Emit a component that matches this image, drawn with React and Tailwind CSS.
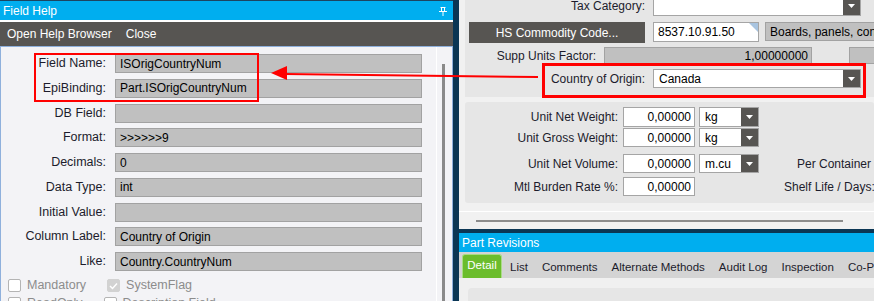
import React from "react";

function DropArrow() {
  return (
    <div className="w-[17px] shrink-0 self-stretch bg-[#575552] flex items-center justify-center">
      <svg width="7" height="4" viewBox="0 0 7 4">
        <polygon points="0,0 7,0 3.5,4" fill="#ffffff" />
      </svg>
    </div>
  );
}

function Select({ value, className }) {
  return (
    <div className={`flex shrink-0 bg-white border border-[#a5a5a5] ${className}`}>
      <span className="flex-1 pl-[5px] flex items-center text-[12px] text-black">{value}</span>
      <DropArrow />
    </div>
  );
}

function NumBox({ value }) {
  return (
    <div className="ml-[5px] w-[72px] h-full shrink-0 bg-white border border-[#a5a5a5] flex items-center justify-end pr-[3px] text-[12px] text-black">
      {value}
    </div>
  );
}

function HelpRow({ label, value }) {
  return (
    <div className="flex items-center h-[19px] shrink-0">
      <div className="w-[105px] shrink-0 text-right text-[12.5px] text-[#1c1c2c]">{label}</div>
      <div className="ml-[9px] w-[307px] shrink-0 h-full bg-[#c0c0c0] border border-[#a2a2a2] flex items-center pl-[4px] text-[12px] text-black">
        {value}
      </div>
    </div>
  );
}

function Check({ label, checked }) {
  return (
    <div className="flex items-center gap-[6px] shrink-0 h-[15px]">
      <div
        className={`w-[13px] h-[13px] rounded-[2px] border flex items-center justify-center ${
          checked ? "bg-[#d2d2d2] border-[#d2d2d2]" : "bg-white border-[#b4b4b4]"
        }`}
      >
        {checked && (
          <svg width="9" height="8" viewBox="0 0 9 8">
            <path d="M1 4 L3.5 6.5 L8 1.5" stroke="#ffffff" strokeWidth="1.5" fill="none" />
          </svg>
        )}
      </div>
      <span className="text-[12.5px] leading-[15px] text-[#8c8c8c]">{label}</span>
    </div>
  );
}

function FieldHelp() {
  const rows = [
    ["Field Name:", "ISOrigCountryNum"],
    ["EpiBinding:", "Part.ISOrigCountryNum"],
    ["DB Field:", ""],
    ["Format:", ">>>>>>9"],
    ["Decimals:", "0"],
    ["Data Type:", "int"],
    ["Initial Value:", ""],
    ["Column Label:", "Country of Origin"],
    ["Like:", "Country.CountryNum"],
  ];
  return (
    <div className="w-[453px] h-full flex flex-col shrink-0">
      <div className="h-[1px] bg-[#1d4560]" />
      <div className="h-[19px] bg-[#00aeef] flex items-center justify-between pl-[3px] pr-[6px] text-white text-[12px]">
        <span>Field Help</span>
        <svg width="8" height="9" viewBox="0 0 8 9" className="mt-[1px]">
          <path d="M1.5 0.5 H6.5 M2.5 0.5 V4.5 M5.5 0.5 V4.5 M0 4.5 H8 M4 4.5 V9" stroke="#ffffff" strokeWidth="1" fill="none" />
        </svg>
      </div>
      <div className="h-[2px] bg-white" />
      <div className="h-[24px] bg-[#575552] flex items-center text-white text-[12px]">
        <span className="ml-[7px]">Open Help Browser</span>
        <span className="ml-[14px]">Close</span>
      </div>
      <div className="flex-1 min-h-0 flex bg-[#f3f3f6] border-l border-t border-r border-[#8fb0dc] overflow-hidden">
        <div className="flex-1 flex flex-col pt-[7px] whitespace-nowrap">
          <div className="flex flex-col gap-[5.75px] shrink-0">
            {rows.map(([l, v]) => (
              <HelpRow key={l} label={l} value={v} />
            ))}
          </div>
          <div className="flex gap-[21px] ml-[7px] mt-[7px] shrink-0">
            <Check label="Mandatory" />
            <Check label="SystemFlag" checked />
          </div>
          <div className="flex gap-[21px] ml-[7px] mt-[3px] shrink-0">
            <Check label="ReadOnly" />
            <Check label="Description Field" />
          </div>
        </div>
        <div className="w-[16px] shrink-0 border-l border-white flex flex-col">
          <div className="ml-[5px] mt-[17px] w-[3px] flex-1 bg-[#8a8a8a]" />
        </div>
      </div>
    </div>
  );
}

function PartPanel() {
  const tabs = ["List", "Comments", "Alternate Methods", "Audit Log", "Inspection", "Co-Parts"];
  return (
    <div className="flex-1 min-w-0 h-full flex flex-col bg-[#f1f1f1] overflow-hidden text-[#1c1c2c] whitespace-nowrap">
      <div className="ml-[6px] h-[97px] shrink-0 bg-[#e6e6e6] flex flex-col">
        <div className="flex items-center h-[20px] -mt-[4px]">
          <div className="w-[180px] shrink-0 text-right text-[12px]">Tax Category:</div>
          <Select value="" className="ml-[8px] w-[208px] h-full" />
        </div>
        <div className="flex items-start h-[22px] mt-[6px]">
          <div className="ml-[4px] w-[176px] shrink-0 h-[21px] bg-[#575552] text-white text-[12px] flex items-center justify-center">
            HS Commodity Code...
          </div>
          <div className="relative ml-[8px] w-[106px] shrink-0 h-[20px] bg-white border border-[#a5a5a5] flex items-center pl-[4px] text-[12px] text-black">
            8537.10.91.50
            <svg width="9" height="9" viewBox="0 0 9 9" className="absolute right-0 top-0">
              <polygon points="0,0 9,0 9,9" fill="#a8c4e0" />
            </svg>
          </div>
          <div className="ml-[6px] w-[140px] shrink-0 h-[19px] bg-[#c0c0c0] border border-[#a2a2a2] flex items-center pl-[4px] text-[12px] text-black">
            Boards, panels, consoles
          </div>
        </div>
        <div className="flex items-center h-[17px] mt-[3px]">
          <div className="w-[131px] shrink-0 text-right text-[12px]">Supp Units Factor:</div>
          <div className="ml-[8px] w-[208px] shrink-0 h-full bg-[#c0c0c0] border border-[#a2a2a2] flex items-center justify-end pr-[3px] text-[12px] text-black">
            1,00000000
          </div>
          <div className="ml-[37px] w-[60px] shrink-0 h-full bg-[#c0c0c0] border border-[#a2a2a2]" />
        </div>
        <div className="flex items-center h-[19px] mt-[5px]">
          <div className="w-[180px] shrink-0 text-right text-[12px]">Country of Origin:</div>
          <Select value="Canada" className="ml-[8px] w-[208px] h-full" />
        </div>
      </div>

      <div className="ml-[6px] mt-[5px] h-[101px] shrink-0 bg-[#e6e6e6] rounded-[3px] flex flex-col pt-[5px]">
        <div className="flex items-center h-[20px]">
          <div className="w-[153px] shrink-0 text-right text-[12px]">Unit Net Weight:</div>
          <NumBox value="0,00000" />
          <Select value="kg" className="ml-[4px] w-[60px] h-full" />
        </div>
        <div className="flex items-center h-[19px] mt-[1px]">
          <div className="w-[153px] shrink-0 text-right text-[12px]">Unit Gross Weight:</div>
          <NumBox value="0,00000" />
          <Select value="kg" className="ml-[4px] w-[60px] h-full" />
        </div>
        <div className="flex items-center h-[19px] mt-[7px]">
          <div className="w-[153px] shrink-0 text-right text-[12px]">Unit Net Volume:</div>
          <NumBox value="0,00000" />
          <Select value="m.cu" className="ml-[4px] w-[60px] h-full" />
          <span className="ml-[38px] shrink-0 text-[12px]">Per Container Qty:</span>
        </div>
        <div className="flex items-center h-[19px] mt-[4px]">
          <div className="w-[153px] shrink-0 text-right text-[12px]">Mtl Burden Rate %:</div>
          <NumBox value="0,00000" />
          <span className="ml-[89px] shrink-0 text-[12px]">Shelf Life / Days:</span>
        </div>
      </div>

      <div className="h-[26px] shrink-0 flex flex-col">
        <div className="h-[8px]" />
        <div className="h-[1px] bg-white" />
        <div className="ml-[17px] mt-[8px] w-[367px] h-[2px] bg-[#8c8c8c]" />
      </div>
      <div className="h-[4px] shrink-0 bg-[#0b3654]" />
      <div className="h-[19px] shrink-0 bg-[#00aeef] flex items-center pl-[3px] text-white text-[12px]">Part Revisions</div>
      <div className="h-[26px] shrink-0 bg-[#d4d4d4] flex items-end text-[11.5px]">
        <div className="ml-[3px] w-[40px] shrink-0 h-[24px] bg-[#6bbd2c] border border-b-0 border-[#a9dc86] rounded-t-[3px] text-white flex items-center justify-center pb-[2px]">
          Detail
        </div>
        <div className="flex items-center h-full gap-[14px] ml-[8px] pt-[5px]">
          {tabs.map((t) => (
            <span key={t} className="shrink-0">{t}</span>
          ))}
        </div>
      </div>
      <div className="flex-1 bg-[#f0f0f0] flex flex-col">
        <div className="ml-[9px] mt-[10px] flex-1 bg-[#e6e6e6] rounded-tl-[4px]" />
      </div>
    </div>
  );
}

export default function App() {
  return (
    <div className="relative w-[874px] h-[301px] overflow-hidden flex bg-[#f1f1f1] font-['Liberation_Sans',Arial,sans-serif]">
      <FieldHelp />
      <div className="w-[6px] h-full bg-[#0b3654] shrink-0" />
      <PartPanel />

      <div className="absolute left-[34px] top-[53px] w-[225px] h-[49px] border-2 border-[#ff0000]" />
      <div className="absolute left-[542px] top-[63px] w-[324px] h-[35px] border-[3px] border-[#ff0000]" />
      <svg className="absolute left-0 top-0" width="874" height="301" viewBox="0 0 874 301">
        <line x1="285" y1="74" x2="538" y2="77" stroke="#ff0000" strokeWidth="2" />
        <polygon points="271,73 287,66 287,80" fill="#ff0000" />
      </svg>
    </div>
  );
}
